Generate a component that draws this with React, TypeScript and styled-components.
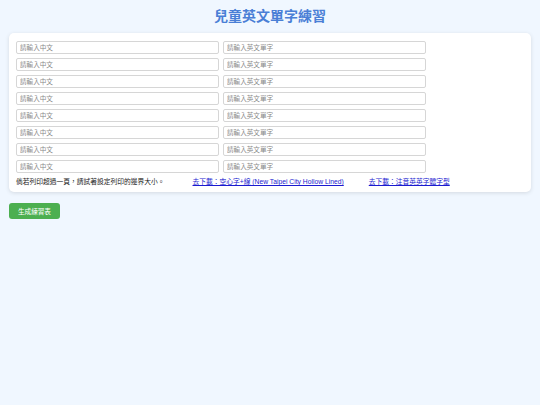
import React from 'react';
import styled, { createGlobalStyle } from 'styled-components';

const GlobalStyle = createGlobalStyle`
    html, body {
        margin: 0;
        padding: 0;
        background-color: #f0f7ff;
        font-family: "Liberation Sans", "Noto Sans CJK TC", sans-serif;
    }
    body {
        min-height: 405px;
    }
`

const Page = styled.div`
    padding: 6px 9px;
`

const Title = styled.h1`
    margin: 0 0 7px;
    text-align: center;
    font-size: 14px;
    line-height: 20px;
    font-weight: bold;
    color: #4a7fd6;
`

const Card = styled.div`
    background: #ffffff;
    border-radius: 5px;
    box-shadow: 0 1px 4px rgba(0, 0, 0, 0.12);
    padding: 8px 7px 5px;
    display: flex;
    flex-direction: column;
    gap: 4px;
`

const Row = styled.div`
    display: flex;
    gap: 4px;
`

const Field = styled.input`
    box-sizing: border-box;
    width: 203px;
    height: 13px;
    padding: 0 3px;
    border: 1px solid #d6d6d6;
    border-radius: 2px;
    font-size: 6.6px;
    font-family: "Liberation Sans", "Noto Sans CJK TC", sans-serif;
    color: #333;
    outline: none;
    &::placeholder {
        color: #8a8a8a;
    }
`

const Notes = styled.div`
    display: flex;
    align-items: center;
    font-size: 6.75px;
    line-height: 10px;
    color: #222;
`

const Link = styled.a`
    margin-left: ${({ $gap }: { $gap: number }) => $gap}px;
    color: #1a1ad0;
    text-decoration: underline;
`

const Generate = styled.button`
    margin-top: 11px;
    height: 16px;
    padding: 0 9px;
    border: none;
    border-radius: 3px;
    background: #4caf50;
    color: #ffffff;
    font-size: 6.6px;
    font-family: "Liberation Sans", "Noto Sans CJK TC", sans-serif;
    cursor: pointer;
`

function App() {
    const rows = Array.from({ length: 8 }, (_, i) => i)

    return (
        <>
            <GlobalStyle />
            <Page>
                <Title>兒童英文單字練習</Title>
                <Card>
                    {rows.map(i => (
                        <Row key={i}>
                            <Field placeholder="請輸入中文" />
                            <Field placeholder="請輸入英文單字" />
                        </Row>
                    ))}
                    <Notes>
                        <span>倘若列印超過一頁，請試著設定列印的邊界大小。</span>
                        <Link $gap={28} href="#">去下載：空心字+線 (New Taipei City Hollow Lined)</Link>
                        <Link $gap={25} href="#">去下載：注音英英字體字型</Link>
                    </Notes>
                </Card>
                <Generate>生成練習表</Generate>
            </Page>
        </>
    )
}

export default App
